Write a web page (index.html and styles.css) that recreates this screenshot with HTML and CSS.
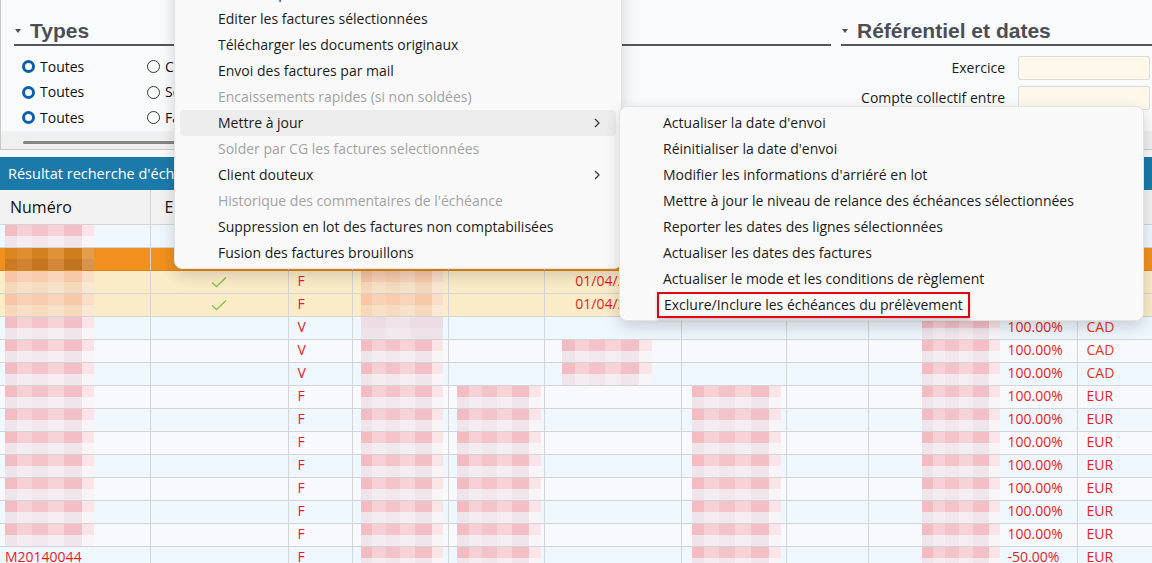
FILE: index.html
```html
<!DOCTYPE html>
<html>
<head>
    <meta charset="UTF-8">
    <title>Échéances</title>
    <link rel="stylesheet" href="styles.css">
</head>
<body>
<div class="page">
    <div class="filters">
        <div class="filter-cols">
            <div class="types">
                <h2 class="sec-title"><span class="caret"></span>Types</h2>
                <div class="radio-grid">
                    <span class="radio on">Toutes</span><span class="radio">Comptabilisées</span>
                    <span class="radio on">Toutes</span><span class="radio">Soldées</span>
                    <span class="radio on">Toutes</span><span class="radio">Factures</span>
                </div>
            </div>
            <div class="ref">
                <h2 class="sec-title"><span class="caret"></span>Référentiel et dates</h2>
                <div class="fields">
                    <span class="lbl">Exercice</span><span class="input"></span>
                    <span class="lbl">Compte collectif entre</span><span class="input"></span>
                </div>
            </div>
        </div>
        <div class="hscroll"><div class="thumb"></div></div>
    </div>

    <div class="result-bar">Résultat recherche d'échéances</div>

    <table class="grid">
        <colgroup>
            <col style="width:150px"><col style="width:138px"><col style="width:64px"><col style="width:96px"><col style="width:96px">
            <col style="width:137px"><col style="width:105px"><col style="width:82px"><col style="width:209px"><col style="width:75px">
        </colgroup>
        <thead>
            <tr><th>Numéro</th><th>E</th><th></th><th></th><th></th><th></th><th></th><th></th><th></th><th></th></tr>
        </thead>
        <tbody>
            <tr class="r-a"><td><i class="blob b-num"></i></td><td></td><td></td><td></td><td></td><td></td><td></td><td></td><td></td><td></td></tr>
            <tr class="r-sel"><td><i class="blob b-num dark"></i></td><td></td><td></td><td></td><td></td><td></td><td></td><td></td><td></td><td></td></tr>
            <tr class="r-y"><td><i class="blob b-num warm"></i></td><td class="c"><svg class="check" width="16" height="12" viewBox="0 0 16 12"><path d="M1 6.5 L5.5 10.5 L15 1.5" fill="none" stroke="#86c24d" stroke-width="1.4"/></svg></td><td>F</td><td><i class="blob b-tiers warm"></i></td><td></td><td class="c">01/04/2014</td><td></td><td></td><td></td><td></td></tr>
            <tr class="r-y"><td><i class="blob b-num warm"></i></td><td class="c"><svg class="check" width="16" height="12" viewBox="0 0 16 12"><path d="M1 6.5 L5.5 10.5 L15 1.5" fill="none" stroke="#86c24d" stroke-width="1.4"/></svg></td><td>F</td><td><i class="blob b-tiers warm"></i></td><td></td><td class="c">01/04/2014</td><td></td><td></td><td></td><td></td></tr>
            <tr class="r-a"><td><i class="blob b-num"></i></td><td></td><td>V</td><td><i class="blob b-tiers pale"></i></td><td></td><td></td><td></td><td></td><td><div class="amt"><i class="blob b-amt"></i><span>100.00%</span></div></td><td class="cur">CAD</td></tr>
            <tr class="r-b"><td><i class="blob b-num"></i></td><td></td><td>V</td><td><i class="blob b-tiers"></i></td><td></td><td><i class="blob b-date"></i></td><td></td><td></td><td><div class="amt"><i class="blob b-amt"></i><span>100.00%</span></div></td><td class="cur">CAD</td></tr>
            <tr class="r-a"><td><i class="blob b-num"></i></td><td></td><td>V</td><td><i class="blob b-tiers"></i></td><td></td><td><i class="blob b-date"></i></td><td></td><td></td><td><div class="amt"><i class="blob b-amt"></i><span>100.00%</span></div></td><td class="cur">CAD</td></tr>
            <tr class="r-b"><td><i class="blob b-num"></i></td><td></td><td>F</td><td><i class="blob b-tiers"></i></td><td><i class="blob b-piece"></i></td><td></td><td><i class="blob b-ech"></i></td><td></td><td><div class="amt"><i class="blob b-amt"></i><span>100.00%</span></div></td><td>EUR</td></tr>
            <tr class="r-a"><td><i class="blob b-num"></i></td><td></td><td>F</td><td><i class="blob b-tiers"></i></td><td><i class="blob b-piece"></i></td><td></td><td><i class="blob b-ech"></i></td><td></td><td><div class="amt"><i class="blob b-amt"></i><span>100.00%</span></div></td><td>EUR</td></tr>
            <tr class="r-b"><td><i class="blob b-num"></i></td><td></td><td>F</td><td><i class="blob b-tiers"></i></td><td><i class="blob b-piece"></i></td><td></td><td><i class="blob b-ech"></i></td><td></td><td><div class="amt"><i class="blob b-amt"></i><span>100.00%</span></div></td><td>EUR</td></tr>
            <tr class="r-a"><td><i class="blob b-num"></i></td><td></td><td>F</td><td><i class="blob b-tiers"></i></td><td><i class="blob b-piece"></i></td><td></td><td><i class="blob b-ech"></i></td><td></td><td><div class="amt"><i class="blob b-amt"></i><span>100.00%</span></div></td><td>EUR</td></tr>
            <tr class="r-b"><td><i class="blob b-num"></i></td><td></td><td>F</td><td><i class="blob b-tiers"></i></td><td><i class="blob b-piece"></i></td><td></td><td><i class="blob b-ech"></i></td><td></td><td><div class="amt"><i class="blob b-amt"></i><span>100.00%</span></div></td><td>EUR</td></tr>
            <tr class="r-a"><td><i class="blob b-num"></i></td><td></td><td>F</td><td><i class="blob b-tiers"></i></td><td><i class="blob b-piece"></i></td><td></td><td><i class="blob b-ech"></i></td><td></td><td><div class="amt"><i class="blob b-amt"></i><span>100.00%</span></div></td><td>EUR</td></tr>
            <tr class="r-b"><td><i class="blob b-num"></i></td><td></td><td>F</td><td><i class="blob b-tiers"></i></td><td><i class="blob b-piece"></i></td><td></td><td><i class="blob b-ech"></i></td><td></td><td><div class="amt"><i class="blob b-amt"></i><span>100.00%</span></div></td><td>EUR</td></tr>
            <tr class="r-a"><td>M20140044</td><td></td><td>F</td><td><i class="blob b-tiers"></i></td><td><i class="blob b-piece"></i></td><td></td><td><i class="blob b-ech"></i></td><td></td><td><div class="amt"><i class="blob b-amt"></i><span>-50.00%</span></div></td><td>EUR</td></tr>
        </tbody>
    </table>

    <!-- menu contextuel -->
    <ul class="ctx-menu">
        <li>Relancer par email</li>
        <li>Editer les factures sélectionnées</li>
        <li>Télécharger les documents originaux</li>
        <li>Envoi des factures par mail</li>
        <li class="off">Encaissements rapides (si non soldées)</li>
        <li class="hover">Mettre à jour<svg class="chev" width="6" height="10" viewBox="0 0 6 10"><path d="M1 1 L5 5 L1 9" fill="none" stroke="#333" stroke-width="1.2"/></svg></li>
        <li class="off">Solder par CG les factures selectionnées</li>
        <li>Client douteux<svg class="chev" width="6" height="10" viewBox="0 0 6 10"><path d="M1 1 L5 5 L1 9" fill="none" stroke="#333" stroke-width="1.2"/></svg></li>
        <li class="off">Historique des commentaires de l'échéance</li>
        <li>Suppression en lot des factures non comptabilisées</li>
        <li>Fusion des factures brouillons</li>
    </ul>
    <ul class="sub-menu">
        <li>Actualiser la date d'envoi</li>
        <li>Réinitialiser la date d'envoi</li>
        <li>Modifier les informations d'arriéré en lot</li>
        <li>Mettre à jour le niveau de relance des échéances sélectionnées</li>
        <li>Reporter les dates des lignes sélectionnées</li>
        <li>Actualiser les dates des factures</li>
        <li>Actualiser le mode et les conditions de règlement</li>
        <li class="mark">Exclure/Inclure les échéances du prélèvement</li>
    </ul>
</div>
</body>
</html>
```

FILE: styles.css
```css
*,*:before,*:after{margin:0;padding:0;box-sizing:border-box;}
body{font:14px/1.3 "Open Sans","Noto Sans",sans-serif;background:#f9f9fb;color:#1b1b1b;overflow:hidden;}
ul,li{list-style:none;}
.page{position:relative;width:1152px;height:563px;overflow:hidden;}

/* filtres */
.filters{height:150px;border-left:1px solid #c9c9c9;border-bottom:1px solid #c9c9c9;background:#f9fafc;display:flex;flex-direction:column;}
.filter-cols{display:flex;flex:1;}
.types{width:830px;padding-left:13px;}
.ref{flex:1;padding-left:10px;}
.sec-title{display:flex;align-items:center;gap:9px;height:46px;padding-top:18px;border-bottom:2px solid #53575d;font:bold 21px/26px "Liberation Sans",Arial,sans-serif;color:#4b4f55;}
.caret{width:0;height:0;border-left:3.5px solid transparent;border-right:3.5px solid transparent;border-top:4px solid #4b4f55;margin-left:1px;}
.radio-grid{display:grid;grid-template-columns:125px 1fr;grid-auto-rows:25.5px;margin-top:8px;padding-left:8px;}
.radio{display:flex;align-items:center;gap:5px;font-size:14px;color:#111;}
.radio:before{content:"";flex:none;width:13px;height:13px;border-radius:50%;border:1px solid #333;background:#fff;}
.radio.on:before{border:3.5px solid #0b5fb3;}
.fields{display:grid;grid-template-columns:1fr 132px;grid-auto-rows:24px;row-gap:6px;column-gap:13px;margin-top:10px;padding-right:2px;}
.lbl{text-align:right;line-height:24px;font-size:14px;}
.input{background:#fdf8ea;border:1px solid #dcdcdc;border-radius:2px;}
.hscroll{height:21px;background:#f0f0f0;padding:10px 12px 0 22px;}
.thumb{height:3px;background:#858585;border-radius:2px;}

.result-bar{margin-top:7px;height:33px;line-height:33px;padding-left:8px;background:#1b7aa9;color:#fff;font-size:14.5px;}

/* grille */
.grid{width:1152px;table-layout:fixed;border-collapse:collapse;color:#ea1c24;}
.grid th{height:34px;background:#f2f2f2;border-right:1px solid #d4d4d4;border-bottom:1px solid #d4d4d4;text-align:left;font-weight:normal;font-size:16px;color:#111;padding:2px 0 0 14px;white-space:nowrap;overflow:hidden;}
.grid th:first-child{padding-left:10px;}
.grid td{height:23px;padding:0 0 0 9px;border-right:1px solid #d4d4d4;border-bottom:1px solid #d4d4d4;white-space:nowrap;overflow:hidden;vertical-align:middle;}
.grid td:first-child{padding-left:5px;}
.grid td.c{text-align:center;padding-left:0;}
.grid td.cur{color:#e8371d;}
.r-a td{background:#eef6fe;}
.r-b td{background:#f8f9fc;}
.r-sel td{background:#f0901e;border-bottom-color:#e08418;}
.r-y td{background:#fbecc8;}
.check{display:block;margin:0 auto;}

.blob{display:block;height:22px;background:
    linear-gradient(90deg,rgba(255,255,255,0) 0 14%,rgba(255,255,255,.3) 14% 30%,rgba(255,255,255,.1) 30% 48%,rgba(255,255,255,.35) 48% 66%,rgba(255,255,255,.05) 66% 86%,rgba(255,255,255,.6) 86%),
    linear-gradient(180deg,#f3bcc3 0 52%,#efe4ea 52%);}
.blob.warm{background:
    linear-gradient(90deg,rgba(255,255,255,0) 0 14%,rgba(255,255,255,.2) 14% 30%,rgba(255,255,255,.1) 30% 48%,rgba(255,255,255,.25) 48% 66%,rgba(255,255,255,.05) 66% 86%,rgba(255,255,255,.4) 86%),
    linear-gradient(180deg,#f8c6a4 0 52%,#f6d7b8 52%);}
.blob.dark{background:
    linear-gradient(90deg,rgba(255,255,255,0) 0 14%,rgba(255,255,255,.08) 14% 30%,rgba(0,0,0,.04) 30% 48%,rgba(255,255,255,.1) 48% 66%,rgba(0,0,0,.06) 66% 86%,rgba(255,255,255,.2) 86%),
    linear-gradient(180deg,#dc861f 0 50%,#cc7a22 50%);}
.blob.pale{background:
    linear-gradient(90deg,rgba(255,255,255,0) 0 30%,rgba(255,255,255,.2) 30% 60%,rgba(255,255,255,0) 60%),
    linear-gradient(180deg,#ecdde4 0 50%,#efe3ea 50%);}
.b-num{width:89px;}
.b-tiers{width:82px;margin-left:-1px;}
.b-piece{width:84px;margin-left:-1px;}
.b-date{width:90px;margin-left:8px;}
.b-ech{width:89px;margin-left:1px;}
.amt{display:flex;align-items:center;}
.b-amt{width:78px;margin-left:44px;margin-right:8px;}

/* menus */
.ctx-menu,.sub-menu{position:absolute;background:#f9f9f9;border:1px solid #e2e2e2;border-radius:8px;box-shadow:0 6px 16px rgba(0,0,0,.16);color:#1b1b1b;}
.ctx-menu{left:174px;top:-25px;width:448px;padding:4px 5px 2px;}
.sub-menu{left:619px;top:106px;width:525px;padding:3px 5px 2px;}
.ctx-menu li,.sub-menu li{position:relative;height:26px;line-height:26px;padding-left:38px;font-size:14px;white-space:nowrap;border-radius:4px;}
.ctx-menu li.off{color:#a3a3a3;}
.ctx-menu li.hover{background:#ededed;}
.chev{position:absolute;right:16px;top:8px;}
.sub-menu li.mark{width:313px;margin-left:32px;padding-left:5px;border:2px solid #e5000f;border-radius:0;line-height:22px;box-shadow:0 2px 3px rgba(0,0,0,.2);}
```
